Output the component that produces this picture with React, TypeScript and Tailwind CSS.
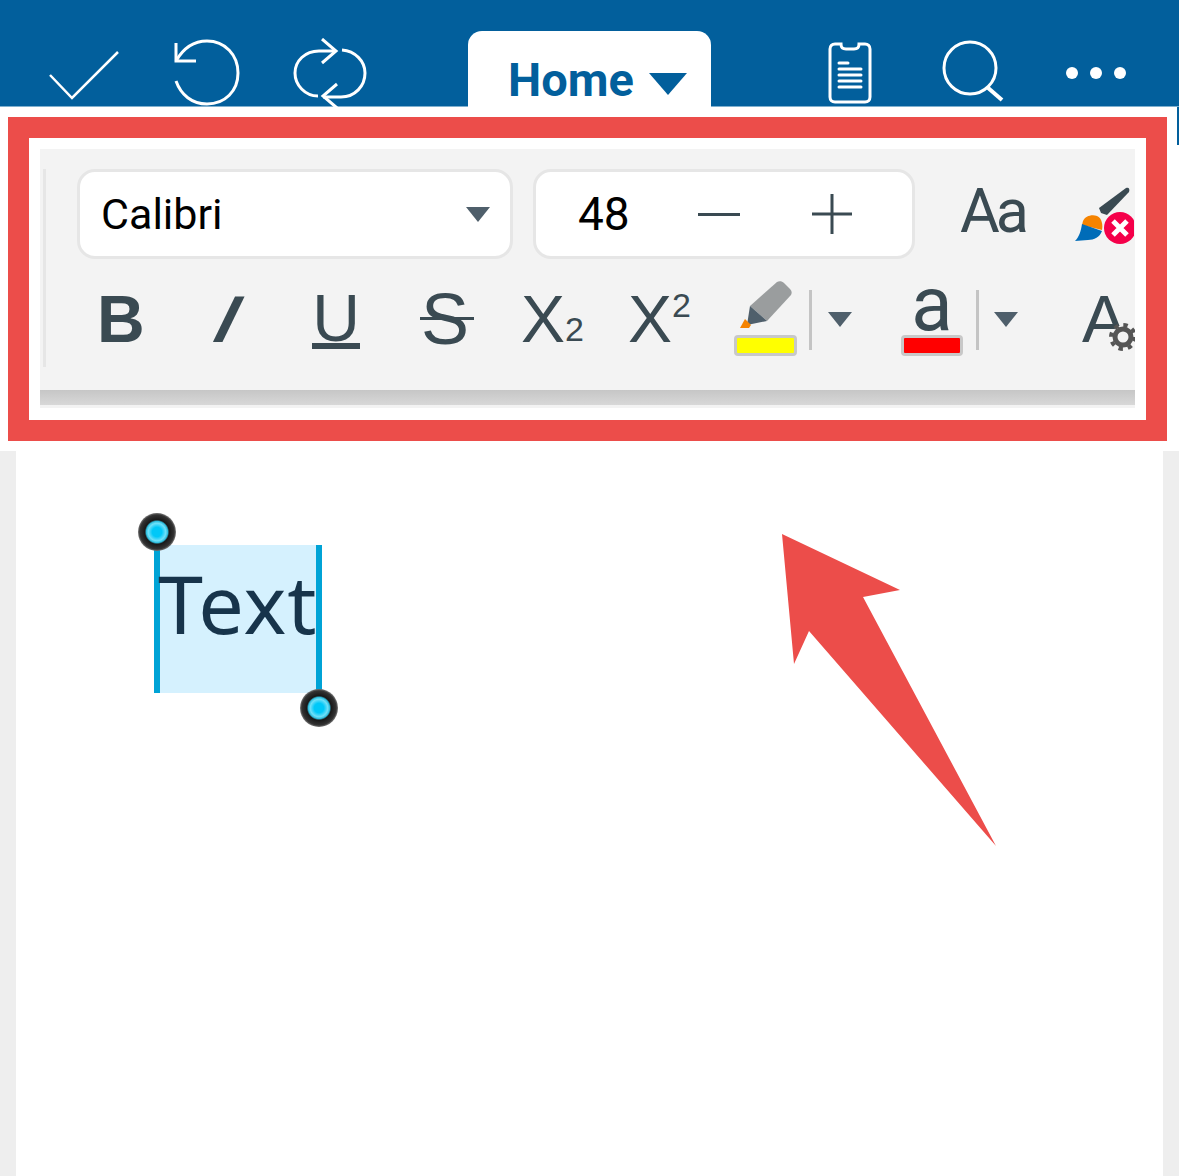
import React from 'react';

const SANS = "font-['Roboto',sans-serif]";
const ARIAL = "font-['Liberation_Sans',Arial,sans-serif]";

function Caret({ className }: { className: string }) {
  return (
    <svg viewBox="0 0 24 15" className={className}>
      <polygon points="0,0 24,0 12,15" fill="#4f5f6b" />
    </svg>
  );
}

function TopBar() {
  return (
    <header className="flex h-[107px] items-end bg-[#025f9c] border-b border-[#7fb0cf]">
      <svg viewBox="0 0 72 72" className="ml-[48px] h-[72px] w-[72px] mb-[4px] shrink-0" fill="none" stroke="#fff" strokeWidth="2.5">
        <path d="M2 45 L24 68 L70 22" />
      </svg>
      <svg viewBox="0 0 68 70" className="ml-[54px] h-[70px] w-[68px] -mb-[2px] shrink-0" fill="none" stroke="#fff" strokeWidth="3">
        <path d="M2 5 V23 H22" />
        <path d="M2 23 C10 9 20 3 33 3 C51 3 64 17 64 35 C64 53 51 66 33 66 C18 66 7 57 2 43" />
      </svg>
      <svg viewBox="0 0 76 70" className="ml-[51px] h-[70px] w-[76px] -mb-[2px] shrink-0" fill="none" stroke="#fff" strokeWidth="3">
        <path d="M29 1 L43 13 L29 25" />
        <path d="M43 13 H26 C12 13 2 23 2 35 C2 47 12 58 25 58" />
        <path d="M49 12 C62 13 72 23 72 35 C72 48 62 59 48 59 H30" />
        <path d="M44 46 L30 58 L44 70" />
      </svg>
      <div className="ml-[99px] flex h-[76px] w-[243px] shrink-0 items-center rounded-t-[14px] bg-white -mb-px">
        <span className={`ml-[40px] mt-[20px] text-[47px] leading-none font-bold text-[#025f9c] ${SANS}`}>Home</span>
        <svg viewBox="0 0 38 22" className="ml-[15px] mt-[30px] h-[22px] w-[38px]">
          <polygon points="0,0 38,0 19,22" fill="#025f9c" />
        </svg>
      </div>
      <svg viewBox="0 0 44 62" className="ml-[117px] h-[62px] w-[44px] mb-[2px] shrink-0" fill="none" stroke="#fff">
        <path strokeWidth="3" d="M7 2 H13 C13 7 16 7 18 7 H26 C28 7 31 7 31 2 H37 C40 2 42 4 42 7 V55 C42 58 40 60 37 60 H7 C4 60 2 58 2 55 V7 C2 4 4 2 7 2 Z" />
        <path strokeWidth="3" strokeLinecap="round" d="M11 21 H20 M11 27 H33 M11 33 H33 M11 39 H33 M11 45 H33" />
      </svg>
      <svg viewBox="0 0 62 62" className="ml-[70px] h-[62px] w-[62px] mb-[4px] shrink-0" fill="none" stroke="#fff" strokeWidth="3">
        <circle cx="28" cy="28" r="26" />
        <path strokeWidth="4" d="M45 47 L60 60" />
      </svg>
      <div className="ml-[62px] mb-[27px] flex shrink-0 gap-[12px]">
        <span className="h-[12px] w-[12px] rounded-full bg-white" />
        <span className="h-[12px] w-[12px] rounded-full bg-white" />
        <span className="h-[12px] w-[12px] rounded-full bg-white" />
      </div>
    </header>
  );
}

function BrushIcon() {
  return (
    <svg viewBox="0 0 60 60" className="ml-[49px] mt-[18px] h-[60px] w-[60px] shrink-0">
      <path d="M25 21 L52 1 C55 0 56 2 55 5 L33 28 L27 26 Z" fill="#3a4a52" />
      <path d="M9 34 C11 29 18 27 23 29 C28 31 29 38 28 43 L8 38 Z" fill="#f58300" />
      <path d="M8 37 L28 44 C26 50 20 53 14 53 L1 54 C5 50 7 44 8 37 Z" fill="#006cb8" />
      <circle cx="46" cy="41" r="16" fill="#f5004a" />
      <path d="M39 34 L53 48 M53 34 L39 48" stroke="#fff" strokeWidth="5" />
    </svg>
  );
}

function FontRow() {
  return (
    <div className="flex items-start">
      <div className="flex h-[90px] w-[436px] shrink-0 items-center rounded-[18px] border-[3px] border-[#e6e6e6] bg-white">
        <span className={`ml-[21px] text-[43px] leading-none text-black ${SANS}`}>Calibri</span>
        <Caret className="ml-auto mr-[20px] h-[15px] w-[24px]" />
      </div>
      <div className="ml-[20px] flex h-[90px] w-[382px] shrink-0 items-center rounded-[18px] border-[3px] border-[#e6e6e6] bg-white">
        <span className={`ml-[42px] text-[46px] leading-none text-black ${SANS}`}>48</span>
        <span className="ml-[68px] h-[3px] w-[42px] bg-[#3a4a52]" />
        <svg viewBox="0 0 40 40" className="ml-[72px] h-[40px] w-[40px]" fill="none" stroke="#3a4a52" strokeWidth="3">
          <path d="M0 20 H40 M20 0 V40" />
        </svg>
      </div>
      <span className={`ml-[45px] mt-[12px] text-[61px] leading-none tracking-[-4px] text-[#3a4a52] ${SANS}`}>Aa</span>
      <BrushIcon />
    </div>
  );
}

function FormatRow() {
  return (
    <div className={`mt-[22px] flex h-[76px] items-start text-[#3a4a52] ${ARIAL}`}>
      <span className="ml-[20px] mt-[5px] w-[46px] text-[66px] leading-[66px] font-bold">B</span>
      <span className="ml-[71px] mt-[5px] w-[30px] -skew-x-[26deg] text-[66px] leading-[66px] font-bold text-center">I</span>
      <span className="ml-[68px] mt-[13px] flex w-[48px] flex-col items-center">
        <span className="text-[66px] leading-[48px]">U</span>
        <span className="mt-[1px] h-[6px] w-[48px] bg-[#3a4a52]" />
      </span>
      <span className="relative ml-[60px] mt-[5px] w-[54px] pr-[4px] text-center text-[72px] leading-[66px]">
        S
        <span className="absolute left-0 top-[31px] h-[3px] w-[54px] bg-[#3a4a52]" />
      </span>
      <span className="ml-[47px] mt-[5px] flex w-[62px] items-start">
        <span className="text-[66px] leading-[66px]">X</span>
        <span className="mt-[27px] text-[34px] leading-[32px]">2</span>
      </span>
      <span className="ml-[45px] mt-[5px] flex w-[62px] items-start">
        <span className="text-[66px] leading-[66px]">X</span>
        <span className="mt-[3px] text-[34px] leading-[32px]">2</span>
      </span>
      <span className="ml-[44px] flex w-[63px] flex-col">
        <svg viewBox="0 0 63 54" className="h-[54px] w-[63px]">
          <path d="M43 1 C45 0 48 0 50 2 L56 8 C58 10 58 12 57 14 L33 40 L16 25 Z" fill="#9a9d9e" />
          <path d="M16 25 L33 40 L13 44 Z" fill="#4f5f6b" />
          <path d="M11 38 L17 44 L15 47 L6 47 Z" fill="#f58300" />
        </svg>
        <span className="block h-[21px] w-[63px] rounded-[4px] border-[3px] border-[#c8c8c8] bg-[#ffff00]" />
      </span>
      <span className="ml-[12px] mt-[9px] h-[60px] w-[3px] bg-[#c4c4c4]" />
      <Caret className="ml-[16px] mt-[31px] h-[15px] w-[24px]" />
      <span className="ml-[49px] flex w-[62px] flex-col items-center">
        <span className={`h-[54px] text-[76px] leading-[46px] ${SANS}`}>a</span>
        <span className="block h-[21px] w-[62px] rounded-[4px] border-[3px] border-[#c8c8c8] bg-[#ff0000]" />
      </span>
      <span className="ml-[13px] mt-[9px] h-[60px] w-[3px] bg-[#c4c4c4]" />
      <Caret className="ml-[15px] mt-[31px] h-[15px] w-[24px]" />
      <span className="relative ml-[64px] mt-[5px] w-[52px] shrink-0 text-[66px] leading-[66px]">
        A
        <svg viewBox="0 0 30 30" className="absolute left-[26px] top-[36px] h-[30px] w-[30px]" fill="none" stroke="#555">
          <circle cx="15" cy="15" r="11.5" fill="#f3f3f3" stroke="none" />
          <circle cx="15" cy="15" r="8" strokeWidth="5" />
          <circle cx="15" cy="15" r="12" strokeWidth="4" strokeDasharray="4.4 5.02" />
        </svg>
      </span>
    </div>
  );
}

function Ribbon() {
  return (
    <section className="relative h-[344px] bg-white pl-[40px] pr-[44px] pt-[42px]">
      <div className="h-[259px] overflow-hidden bg-[#f3f3f3]">
        <div className="flex h-[241px]">
          <span className="ml-[3px] mt-[20px] h-[198px] w-[3px] shrink-0 bg-[#e6e6e6]" />
          <div className="ml-[31px] w-[1100px] shrink-0 pt-[20px]">
            <FontRow />
            <FormatRow />
          </div>
        </div>
        <div className="h-[15px] bg-gradient-to-b from-[#c6c6c6] to-[#d8d8d8]" />
      </div>
      <div className="absolute left-[8px] top-[10px] h-[324px] w-[1159px] border-[21px] border-[#ec4d4a]" />
      <div className="absolute right-0 top-0 h-[38px] w-[2px] bg-[#025f9c]" />
    </section>
  );
}

function Handle({ className }: { className: string }) {
  return (
    <span className={`absolute h-[38px] w-[38px] rounded-full bg-[radial-gradient(circle_closest-side,#00c8f8_25%,#70e0f8_46%,#30c0e0_56%,#181818_64%,#333333_90%,#777777_100%)] ${className}`} />
  );
}

function Page() {
  return (
    <main className="mx-[16px] min-h-[725px] bg-white pl-[138px] pt-[94px]">
      <div className="relative h-[148px] w-[168px] bg-[#d5f1fe]">
        <span className="absolute left-0 top-[5px] h-[143px] w-[6px] bg-[#00a3d6]" />
        <span className="absolute right-0 top-0 h-[150px] w-[6px] bg-[#00a3d6]" />
        <span className="absolute left-[4px] top-[11px] text-[81px] leading-[94px] tracking-[1px] text-[#17344b] font-['Noto_Sans',sans-serif]">Text</span>
        <Handle className="-left-[16px] -top-[32px]" />
        <Handle className="left-[146px] top-[144px]" />
      </div>
    </main>
  );
}

export default function App() {
  return (
    <div className="relative h-[1176px] w-[1179px] overflow-hidden bg-[#eeeeee]">
      <TopBar />
      <Ribbon />
      <Page />
      <svg viewBox="0 0 1179 1176" className="pointer-events-none absolute inset-0 h-[1176px] w-[1179px]">
        <polygon points="782,534 900,590 863,597 996,846 809,631 794,664" fill="#ec4d4a" />
      </svg>
    </div>
  );
}
